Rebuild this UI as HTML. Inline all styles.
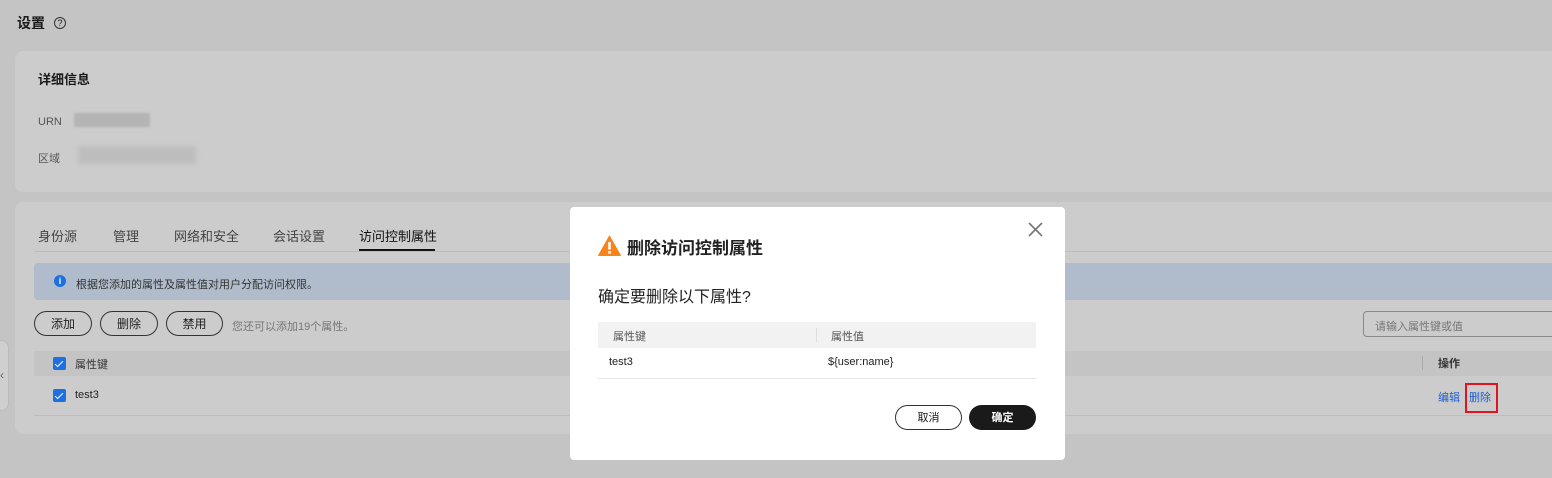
<!DOCTYPE html>
<html><head><meta charset="utf-8"><style>
*{margin:0;padding:0;box-sizing:border-box}
body{width:1552px;height:478px;overflow:hidden;background:#c4c4c4;font-family:"Liberation Sans","Noto Sans CJK SC",sans-serif;color:#1a1a1a;position:relative;font-size:12px}
.a{position:absolute;white-space:nowrap}
.card{position:absolute;background:#cccccc;border-radius:8px}
.btn{position:absolute;border:1px solid #333;border-radius:13px;height:25px;line-height:25px;text-align:center;font-size:12px;color:#222}
.cb{position:absolute;width:13px;height:13px;background:#1f6fe0;border-radius:2px}
.cb:after{content:"";position:absolute;left:4px;top:1.5px;width:3px;height:7px;border:solid #fff;border-width:0 1.5px 1.5px 0;transform:rotate(45deg)}
</style></head><body>
<div class="a" style="left:17px;top:13px;font-size:14px;font-weight:bold">设置</div>
<div class="a" style="left:54px;top:17px;width:12px;height:12px;border:1px solid #333;border-radius:50%;font-size:9px;line-height:10px;text-align:center">?</div>
<div class="card" style="left:15px;top:51px;width:1560px;height:141px"></div>
<div class="a" style="left:38px;top:69px;font-size:13px;font-weight:bold">详细信息</div>
<div class="a" style="left:38px;top:116px;font-size:11px;color:#555">URN</div>
<div class="a" style="left:74px;top:113px;width:76px;height:14px;background:#b4b4b4;filter:blur(1px)"></div>
<div class="a" style="left:38px;top:150px;font-size:11px;color:#555">区域</div>
<div class="a" style="left:78px;top:146px;width:118px;height:18px;background:#bdbdbd;filter:blur(2px)"></div>
<div class="card" style="left:15px;top:202px;width:1560px;height:232px"></div>
<div class="a" style="left:34px;top:251px;width:1530px;height:1px;background:#bdbdbd"></div>
<div class="a" style="left:38px;top:226px;font-size:13px;color:#444">身份源</div>
<div class="a" style="left:113px;top:226px;font-size:13px;color:#444">管理</div>
<div class="a" style="left:174px;top:226px;font-size:13px;color:#444">网络和安全</div>
<div class="a" style="left:273px;top:226px;font-size:13px;color:#444">会话设置</div>
<div class="a" style="left:359px;top:226px;font-size:13px;color:#111">访问控制属性</div>
<div class="a" style="left:359px;top:249px;width:76px;height:2px;background:#111"></div>
<div class="a" style="left:34px;top:263px;width:1530px;height:37px;background:#b0bccb;border-radius:4px"></div>
<div class="a" style="left:54px;top:275px;width:12px;height:12px;border-radius:50%;background:#1f6fe0;color:#fff;font-size:9px;font-weight:bold;text-align:center;line-height:12px">i</div>
<div class="a" style="left:76px;top:276px;font-size:11px;color:#333">根据您添加的属性及属性值对用户分配访问权限。</div>
<div class="btn" style="left:34px;top:311px;width:58px">添加</div>
<div class="btn" style="left:100px;top:311px;width:58px">删除</div>
<div class="btn" style="left:166px;top:311px;width:57px">禁用</div>
<div class="a" style="left:232px;top:318px;font-size:11px;color:#777">您还可以添加19个属性。</div>
<div class="a" style="left:1363px;top:311px;width:200px;height:26px;border:1px solid #888;border-radius:4px;font-size:11px;color:#777;padding:6px 11px">请输入属性键或值</div>
<div class="a" style="left:34px;top:351px;width:1530px;height:25px;background:#c4c4c4"></div>
<div class="cb" style="left:53px;top:357px"></div>
<div class="a" style="left:75px;top:356px;font-size:11px;color:#333">属性键</div>
<div class="a" style="left:1422px;top:356px;width:1px;height:14px;background:#aaa"></div>
<div class="a" style="left:1438px;top:355px;font-size:11px;font-weight:bold;color:#333">操作</div>
<div class="cb" style="left:53px;top:389px"></div>
<div class="a" style="left:75px;top:389px;font-size:11px;color:#222">test3</div>
<div class="a" style="left:34px;top:415px;width:1530px;height:1px;background:#bdbdbd"></div>
<div class="a" style="left:1438px;top:389px;font-size:11px;color:#1f5fd0">编辑</div>
<div class="a" style="left:1469px;top:389px;font-size:11px;color:#1f5fd0">删除</div>
<div class="a" style="left:1465px;top:383px;width:33px;height:30px;border:2px solid #e0141e"></div>
<div class="a" style="left:-10px;top:340px;width:19px;height:71px;background:#cfcfcf;border-radius:8px;border:1px solid #bbb"></div>
<div class="a" style="left:0px;top:368px;font-size:12px;color:#666">‹</div>

<div class="a" style="left:570px;top:207px;width:495px;height:253px;background:#fff;border-radius:4px"></div>
<svg class="a" style="left:1027px;top:221px" width="17" height="17" viewBox="0 0 17 17"><path d="M2 2L15 15M15 2L2 15" stroke="#777" stroke-width="1.6"/></svg>
<svg class="a" style="left:598px;top:235px" width="23" height="21" viewBox="0 0 23 21"><path d="M11.5 1L22.5 20.5H0.5Z" fill="#f7851c" stroke="#f7851c" stroke-linejoin="round"/><rect x="10.2" y="7" width="2.6" height="7.5" fill="#fff"/><rect x="10.2" y="16" width="2.6" height="2.6" fill="#fff"/></svg>
<div class="a" style="left:627px;top:234px;font-size:17px;font-weight:bold;color:#222">删除访问控制属性</div>
<div class="a" style="left:598px;top:283px;font-size:16px;color:#222">确定要删除以下属性?</div>
<div class="a" style="left:598px;top:322px;width:438px;height:26px;background:#f2f2f2"></div>
<div class="a" style="left:816px;top:328px;width:1px;height:14px;background:#ddd"></div>
<div class="a" style="left:613px;top:328px;font-size:11px;color:#555">属性键</div>
<div class="a" style="left:831px;top:328px;font-size:11px;color:#555">属性值</div>
<div class="a" style="left:609px;top:356px;font-size:11px;color:#222">test3</div>
<div class="a" style="left:828px;top:356px;font-size:11px;color:#222">${user:name}</div>
<div class="a" style="left:598px;top:378px;width:438px;height:1px;background:#e5e5e5"></div>
<div class="a" style="left:895px;top:405px;width:67px;height:25px;border:1px solid #333;border-radius:13px;text-align:center;line-height:25px;font-size:11px">取消</div>
<div class="a" style="left:969px;top:405px;width:67px;height:25px;background:#1a1a1a;border-radius:13px;text-align:center;line-height:26px;font-size:11px;color:#fff;font-weight:bold">确定</div>
</body></html>
